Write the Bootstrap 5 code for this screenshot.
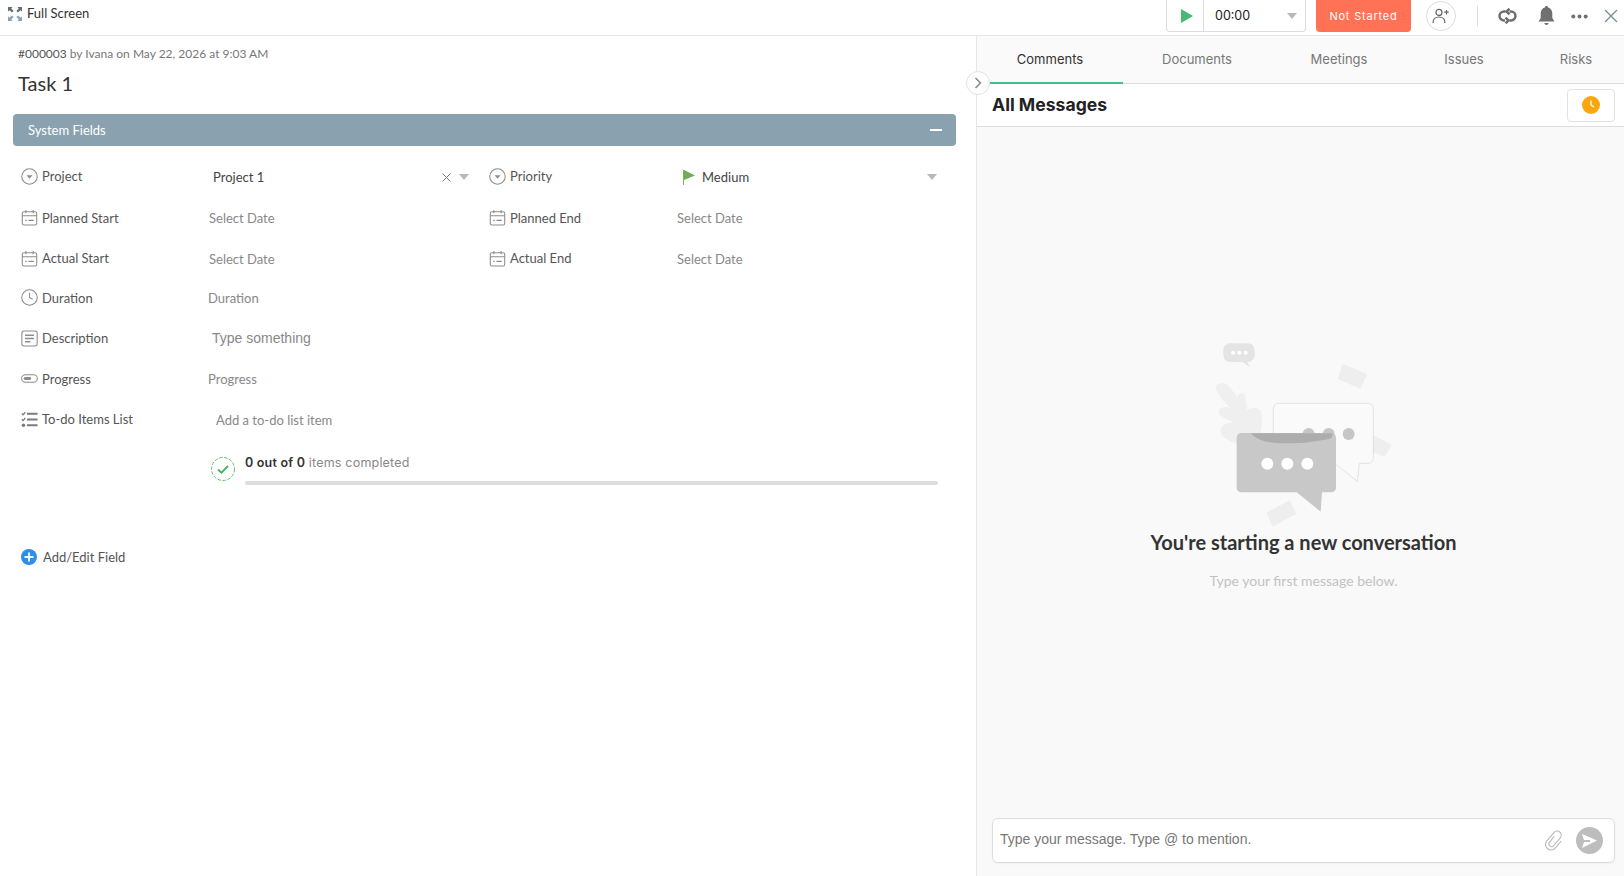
<!DOCTYPE html>
<html lang="en">
<head>
    <meta charset="UTF-8">
    <title>Task 1</title>
    <link rel="stylesheet" href="https://cdn.jsdelivr.net/npm/bootstrap@5.3.0/dist/css/bootstrap.min.css">
    <style>
        html, body { height: 100%; overflow: hidden; }
        body { font-family: "Lato", "Liberation Sans", sans-serif; font-size: 13px; color: #555; background: #fff; }

        .top-strip { height: 36px; border-bottom: 1px solid #e6e6e6; padding: 0 6px 3px 8px; }
        .full-wrap { margin-bottom: 5px; }
        .full-label { font-size: 13px; color: #333; margin-left: 5px; }
        .timer-box { width: 140px; height: 32px; border: 1px solid #ddd; border-top: 0; border-radius: 0 0 4px 4px; font-family: "Inter", sans-serif; font-size: 12.5px; color: #222; }
        .timer-play { width: 37px; height: 100%; border-right: 1px solid #ddd; padding-left: 3px; }
        .timer-value { padding: 1px 0 0 11px; }
        .caret-down { width: 0; height: 0; border-left: 5px solid transparent; border-right: 5px solid transparent; border-top: 6px solid #b9b9b9; }
        .status-btn { width: 95px; height: 32px; margin-left: 10px; background: #ff7256; color: #fff; border: 0; border-radius: 0 0 4px 4px; font-family: "Inter", sans-serif; font-size: 11px; letter-spacing: .8px; padding: 0; }
        .assign-btn { width: 30px; height: 30px; margin-left: 15px; border: 1px solid #ddd; border-radius: 50%; background: #fff; padding: 0; }
        .top-sep { width: 1px; height: 20px; background: #ddd; margin: 0 20px 0 21px; }
        .bell-gap { margin-left: 21px; }

        .main-split { height: 840px; }
        .left-pane { width: 976px; flex: none; padding: 10px 20px 0 13px; }
        .task-meta { font-size: 12px; color: #777; padding-left: 5px; line-height: 16px; }
        .task-meta b { font-weight: 400; color: #555; }
        .task-title { font-size: 20px; font-weight: 400; color: #333; padding-left: 5px; margin: 6px 0 0; line-height: 30px; height: 30px; }
        .section-bar { height: 32px; margin-top: 16px; background: #8aa2af; color: #fff; border-radius: 4px; padding: 0 14px 1px 15px; font-size: 13px; }
        .section-bar span:first-child { transform: translateY(1px); }
        .minus-mark { width: 12px; height: 2px; background: #fff; }

        .field-list { padding: 11px 0 0 8px; }
        .field-row { height: 40.5px; }
        .field-row.is-date .field-name { transform: none; }
        .field-row.is-date .field-value { transform: translateY(1px); }
        .field-cell { width: 468px; flex: none; }
        .field-name { width: 188px; flex: none; color: #555; line-height: 18px; transform: translateY(-1px); }
        .field-name svg { margin-right: 4px; flex: none; }
        .field-value { flex: 1; color: #888; font-size: 13px; }
        .val-select { color: #444; padding-left: 4px; padding-right: 20px; }
        .val-plain { margin-left: -1px; }
        .val-arial { font-family: "Liberation Sans", sans-serif; font-size: 14px; padding-left: 3px; transform: translateY(-1px); }
        .flag-gap { margin: 0 7px 0 2px; }
        .todo-stats { padding-left: 190px; margin-top: 14px; }
        .todo-icon { flex: none; margin: 2px 10px 0 0; }
        .todo-text { font-family: "Inter", sans-serif; font-size: 12.5px; letter-spacing: .2px; color: #888; line-height: 16px; }
        .todo-text b { font-weight: 600; color: #333; margin-right: 0; }
        .todo-track { height: 4px; width: 693px; margin-top: 10px; background: #ddd; border-radius: 2px; }
        .add-field { margin-top: 63px; line-height: 18px; }
        .add-field svg { margin-right: 6px; }

        .right-pane { flex: 1; border-left: 1px solid #e6e6e6; background: #f9f9f9; position: relative; min-width: 0; }
        .tab-strip { height: 48px; background: #fafafa; border-bottom: 1px solid #ddd; padding-left: 13px; }
        .tab-item { height: 48px; line-height: 46px; font-family: "Inter", sans-serif; font-size: 13px; color: #777; text-align: center; flex: none; white-space: nowrap; }
        .tab-item.is-on { color: #333; border-bottom: 2px solid #44c08f; padding-right: 13px; }
        .messages-head { height: 43px; background: #fff; border-bottom: 1px solid #ddd; padding: 0 9px 0 15px; }
        .messages-head h2 { font-family: "Inter", sans-serif; font-weight: 700; font-size: 17.6px; color: #222; margin: 0; }
        .clock-btn { width: 48px; height: 33px; background: #fff; border: 1px solid #e2e2e2; border-radius: 4px; padding: 0; }
        .collapse-dot { position: absolute; left: -11px; top: 35px; width: 24px; height: 24px; border-radius: 50%; background: #fff; border: 1px solid #e2e2e2; z-index: 2; }
        .empty-state { flex: 1; padding-top: 193px; min-height: 0; }
        .empty-art { margin-right: 2px; }
        .empty-title { font-weight: 700; font-size: 20px; color: #333; line-height: 26px; padding-left: 6px; transform: translateY(-1px); }
        .empty-sub { color: #c2c2c2; font-size: 14px; line-height: 18px; margin-top: 16px; padding-left: 6px; }
        .compose-box { height: 45px; margin: 0 9px 13px 15px; background: #fff; border: 1px solid #ddd; border-radius: 6px; padding: 0 11px 0 7px; box-shadow: 0 1px 2px rgba(0,0,0,.04); }
        .compose-hint { font-family: "Liberation Sans", sans-serif; font-size: 14px; color: #777; transform: translateY(-1px); }
        .send-dot { width: 27px; height: 27px; border-radius: 50%; background: #bdbdbd; margin-left: 11px; }
    </style>
</head>
<body>
    <svg width="0" height="0" class="position-absolute">
        <defs>
            <symbol id="ico-select" viewBox="0 0 16 16"><circle cx="8" cy="8" r="7.3" fill="none" stroke="#8c8c8c"/><path d="M5.200 6.800h5.600L8 10z" fill="#8c8c8c"/></symbol>
            <symbol id="ico-date" viewBox="0 0 16 16"><rect x="1.200" y="2.600" width="13.600" height="12.400" rx="1.600" fill="none" stroke="#8c8c8c"/><path d="M1.200 6.400h13.600M4.600 1v3M11.400 1v3" stroke="#8c8c8c" fill="none"/><path d="M4 10.800h1.400M7 10.800h5" stroke="#8c8c8c" stroke-width="1.200"/></symbol>
            <symbol id="ico-time" viewBox="0 0 16 16"><circle cx="8" cy="8" r="7.3" fill="none" stroke="#8c8c8c"/><path d="M8 3.600V8l3 1.600" fill="none" stroke="#8c8c8c"/></symbol>
            <symbol id="ico-text" viewBox="0 0 16 16"><rect x=".8" y="1" width="14.400" height="14" rx="2" fill="none" stroke="#8c8c8c"/><path d="M3.800 5h8.400M3.800 8h8.400M3.800 11h5" stroke="#8c8c8c" stroke-width="1.300"/></symbol>
            <symbol id="ico-progress" viewBox="0 0 16 16"><rect x=".6" y="4.400" width="14.800" height="7.200" rx="3.600" fill="none" stroke="#8c8c8c"/><rect x="2.600" y="6.600" width="7" height="2.800" rx="1.400" fill="#8c8c8c"/></symbol>
            <symbol id="ico-todo" viewBox="0 0 16 16"><path d="M5.600 2.600h10M5.600 8h10M5.600 13.400h10" stroke="#7c7c7c" stroke-width="1.800"/><path d="M.8 2.400l1.200 1.200 2-2.400M.8 7.800 2 9l2-2.400" fill="none" stroke="#7c7c7c" stroke-width="1.200"/><circle cx="2.300" cy="13.400" r="1.700" fill="#7c7c7c"/></symbol>
        </defs>
    </svg>

    <header class="top-strip d-flex align-items-center">
        <div class="full-wrap d-flex align-items-center">
            <svg width="14" height="14" viewBox="0 0 14 14"><path d="M0 0h4.600L3.200 1.600 5.600 4 4 5.600 1.600 3.200 0 4.600z" fill="#5c6e78"/><path d="M14 0H9.400l1.400 1.600L8.400 4 10 5.600l2.400-2.400L14 4.600z" fill="#5c6e78"/><path d="M0 14h4.600l-1.400-1.600L5.600 10 4 8.400l-2.400 2.400L0 9.400z" fill="#8aa2af"/><path d="M14 14H9.400l1.400-1.600L8.400 10 10 8.400l2.400 2.400L14 9.400z" fill="#8aa2af"/></svg>
            <span class="full-label">Full Screen</span>
        </div>
        <div class="ms-auto d-flex align-items-center">
            <div class="timer-box d-flex align-items-center">
                <div class="timer-play d-flex align-items-center justify-content-center">
                    <svg width="12" height="14" viewBox="0 0 12 14"><path d="M0 0l12 7L0 14z" fill="#46b978"/></svg>
                </div>
                <span class="timer-value">00:00</span>
                <span class="caret-down ms-auto me-2"></span>
            </div>
            <button type="button" class="status-btn">Not Started</button>
            <button type="button" class="assign-btn d-flex align-items-center justify-content-center">
                <svg width="18" height="16" viewBox="0 0 18 16" fill="none" stroke="#666" stroke-width="1.200"><circle cx="7" cy="4.400" r="3"/><path d="M1 15c0-4 2.600-6 6-6s6 2 6 6"/><path d="M14.500 2v4.400M12.300 4.200h4.400"/></svg>
            </button>
            <span class="top-sep"></span>
            <svg width="19" height="16" viewBox="0 0 19 16" fill="none" stroke="#6c6c6c" stroke-width="2.400"><path d="M7.500 3.500H6A4.500 4.500 0 0 0 6 12.500h1"/><path d="M11.500 12.500H13a4.500 4.500 0 0 0 0-9h-1.500"/><path d="M11.500 .7 8.500 3.500l3 2.800M7.500 9.700l3 2.800-3 2.800"/></svg>
            <svg class="bell-gap" width="17" height="20" viewBox="0 0 17 20"><path d="M8.500 0c1 0 1.600.7 1.600 1.600 2.800.7 4.200 3 4.200 6V12l2.200 3.400H.5L2.700 12V7.600c0-3 1.400-5.300 4.200-6C6.900.7 7.500 0 8.500 0z" fill="#707070"/><path d="M6.300 17h4.400c-.3 1.300-1.100 2-2.200 2s-1.900-.7-2.200-2z" fill="#707070"/></svg>
            <svg class="ms-3" width="17" height="5" viewBox="0 0 17 5" fill="#707070"><circle cx="2.300" cy="2.500" r="2"/><circle cx="8.500" cy="2.500" r="2"/><circle cx="14.700" cy="2.500" r="2"/></svg>
            <svg class="ms-3" width="14" height="14" viewBox="0 0 14 14" stroke="#7c8c96" stroke-width="1.300"><path d="M1 1l12 12M13 1 1 13"/></svg>
        </div>
    </header>

    <div class="main-split d-flex">
        <section class="left-pane">
            <div class="task-meta"><b>#000003</b> by Ivana on May 22, 2026 at 9:03 AM</div>
            <h1 class="task-title">Task 1</h1>
            <div class="section-bar d-flex align-items-center justify-content-between">
                <span>System Fields</span>
                <span class="minus-mark"></span>
            </div>

            <div class="field-list">
                <div class="field-row d-flex align-items-center">
                    <div class="field-cell d-flex align-items-center">
                        <div class="field-name d-flex align-items-center"><svg width="17" height="17"><use href="#ico-select"/></svg>Project</div>
                        <div class="field-value val-select d-flex align-items-center">
                            <span>Project 1</span>
                            <svg class="ms-auto" width="9" height="9" viewBox="0 0 9 9" stroke="#777"><path d="M.5.5l8 8M8.500.5l-8 8"/></svg>
                            <span class="caret-down ms-2"></span>
                        </div>
                    </div>
                    <div class="field-cell d-flex align-items-center">
                        <div class="field-name d-flex align-items-center"><svg width="17" height="17"><use href="#ico-select"/></svg>Priority</div>
                        <div class="field-value val-select d-flex align-items-center">
                            <svg class="flag-gap" width="12" height="15" viewBox="0 0 12 15"><path d="M.5 0v15" stroke="#7cb35a"/><path d="M1 0l11 5.500L1 10z" fill="#73ab50"/></svg>
                            <span>Medium</span>
                            <span class="caret-down ms-auto"></span>
                        </div>
                    </div>
                </div>
                <div class="field-row is-date d-flex align-items-center">
                    <div class="field-cell d-flex align-items-center">
                        <div class="field-name d-flex align-items-center"><svg width="17" height="17"><use href="#ico-date"/></svg>Planned Start</div>
                        <div class="field-value">Select Date</div>
                    </div>
                    <div class="field-cell d-flex align-items-center">
                        <div class="field-name d-flex align-items-center"><svg width="17" height="17"><use href="#ico-date"/></svg>Planned End</div>
                        <div class="field-value">Select Date</div>
                    </div>
                </div>
                <div class="field-row is-date d-flex align-items-center">
                    <div class="field-cell d-flex align-items-center">
                        <div class="field-name d-flex align-items-center"><svg width="17" height="17"><use href="#ico-date"/></svg>Actual Start</div>
                        <div class="field-value">Select Date</div>
                    </div>
                    <div class="field-cell d-flex align-items-center">
                        <div class="field-name d-flex align-items-center"><svg width="17" height="17"><use href="#ico-date"/></svg>Actual End</div>
                        <div class="field-value">Select Date</div>
                    </div>
                </div>
                <div class="field-row d-flex align-items-center">
                    <div class="field-name d-flex align-items-center"><svg width="17" height="17"><use href="#ico-time"/></svg>Duration</div>
                    <div class="field-value val-plain">Duration</div>
                </div>
                <div class="field-row d-flex align-items-center">
                    <div class="field-name d-flex align-items-center"><svg width="17" height="17"><use href="#ico-text"/></svg>Description</div>
                    <div class="field-value val-arial">Type something</div>
                </div>
                <div class="field-row d-flex align-items-center">
                    <div class="field-name d-flex align-items-center"><svg width="17" height="17"><use href="#ico-progress"/></svg>Progress</div>
                    <div class="field-value val-plain">Progress</div>
                </div>
                <div class="field-row d-flex align-items-center">
                    <div class="field-name d-flex align-items-center"><svg width="17" height="17"><use href="#ico-todo"/></svg>To-do Items List</div>
                    <div class="field-value val-plain ps-2">Add a to-do list item</div>
                </div>
                <div class="todo-stats d-flex">
                    <svg width="24" height="24" viewBox="0 0 24 24" class="todo-icon" fill="none"><circle cx="12" cy="12" r="11.500" stroke="#5cc26f" stroke-dasharray="3.500 1.500"/><path d="M7 12.500l3.500 3.200L17 9" stroke="#44b45e" stroke-width="1.800"/></svg>
                    <div>
                        <div class="todo-text"><b>0 out of 0</b> items completed</div>
                        <div class="todo-track"></div>
                    </div>
                </div>
                <div class="add-field d-flex align-items-center">
                    <svg width="16" height="16" viewBox="0 0 16 16"><circle cx="8" cy="8" r="8" fill="#2d8fe8"/><path d="M8 3.500v9M3.500 8h9" stroke="#fff" stroke-width="1.800"/></svg>
                    <span>Add/Edit Field</span>
                </div>
            </div>
        </section>

        <section class="right-pane d-flex flex-column">
            <div class="collapse-dot d-flex align-items-center justify-content-center">
                <svg width="8" height="12" viewBox="0 0 8 12" fill="none" stroke="#888" stroke-width="1.500"><path d="M1.500 1l5 5-5 5"/></svg>
            </div>
            <nav class="tab-strip d-flex">
                <div class="tab-item is-on" style="width:133px">Comments</div>
                <div class="tab-item" style="width:148px">Documents</div>
                <div class="tab-item" style="width:136px">Meetings</div>
                <div class="tab-item" style="width:114px">Issues</div>
                <div class="tab-item" style="width:110px">Risks</div>
            </nav>
            <div class="messages-head d-flex align-items-center justify-content-between">
                <h2>All Messages</h2>
                <button type="button" class="clock-btn d-flex align-items-center justify-content-center">
                    <svg width="18" height="18" viewBox="0 0 18 18"><circle cx="9" cy="9" r="9" fill="#f9a60f"/><path d="M9 4.500V9l3 2" fill="none" stroke="#fff" stroke-width="1.300"/></svg>
                </button>
            </div>
            <div class="empty-state d-flex flex-column align-items-center text-center">
                <svg class="empty-art" width="240" height="210" viewBox="0 0 720 630">
                    <path d="M150 70h54a20 20 0 0 1 20 20v16a20 20 0 0 1-20 20h-2l8 16-22-16h-38a20 20 0 0 1-20-20V90a20 20 0 0 1 20-20z" fill="#e4e4e4"/>
                    <circle cx="159" cy="98" r="6" fill="#fff"/><circle cx="178" cy="98" r="6" fill="#fff"/><circle cx="197" cy="98" r="6" fill="#fff"/>
                    <path d="M488 132l74 30-21 44-68-30z" fill="#eeeeee"/>
                    <path d="M564 336l71 38-20 36-70-26z" fill="#eeeeee"/>
                    <path d="M260 578l70-38 18 42-70 38z" fill="#eeeeee"/>
                    <path d="M108 200c6-14 26-14 38-2l26 32c2-14 22-14 24 0l6 40c10-8 34-10 40 4 6 16 6 50-4 76l-70 20c-24-8-46-20-46-38 0-16 22-26 40-24-18-10-50-20-46-36 4-12 24-14 34-8-14-20-46-46-42-64z" fill="#efefef"/>
                    <path d="M296 250h268a16 16 0 0 1 16 16v148a16 16 0 0 1-16 16h-26l-6 54-68-54H296a16 16 0 0 1-16-16V266a16 16 0 0 1 16-16z" fill="#fafafa" stroke="#d8d8d8" stroke-width="2"/>
                    <circle cx="386" cy="342" r="18" fill="#c6c6c6"/><circle cx="446" cy="342" r="18" fill="#c6c6c6"/><circle cx="506" cy="342" r="18" fill="#c6c6c6"/>
                    <path d="M184 339h270a14 14 0 0 1 14 14v150a14 14 0 0 1-14 14h-28l-4 58-72-58H184a14 14 0 0 1-14-14V353a14 14 0 0 1 14-14z" fill="#c8c8c8"/>
                    <path d="M212 340h244c4 0 2 14-6 16-50 10-110 18-170 12-30-2-52-12-68-28z" fill="#adadad"/>
                    <circle cx="262" cy="431" r="18" fill="#fff"/><circle cx="322" cy="431" r="18" fill="#fff"/><circle cx="382" cy="431" r="18" fill="#fff"/>
                </svg>
                <div class="empty-title">You're starting a new conversation</div>
                <div class="empty-sub">Type your first message below.</div>
            </div>
            <div class="compose-box d-flex align-items-center">
                <span class="compose-hint">Type your message. Type @ to mention.</span>
                <svg class="ms-auto" width="22" height="22" viewBox="0 0 24 24" fill="none" stroke="#bdbdbd" stroke-width="1.300"><path transform="rotate(40 12 12)" d="M9 8v8a3 3 0 0 0 6 0V5a4.500 4.500 0 0 0-9 0v12a6 6 0 0 0 12 0V7"/></svg>
                <div class="send-dot d-flex align-items-center justify-content-center">
                    <svg width="15" height="14" viewBox="0 0 15 14"><path d="M0 0l15 6.500L0 14l2-6h6V6H2z" fill="#fff"/></svg>
                </div>
            </div>
        </section>
    </div>
    <script src="https://cdn.jsdelivr.net/npm/bootstrap@5.3.0/dist/js/bootstrap.bundle.min.js"></script>
</body>
</html>
